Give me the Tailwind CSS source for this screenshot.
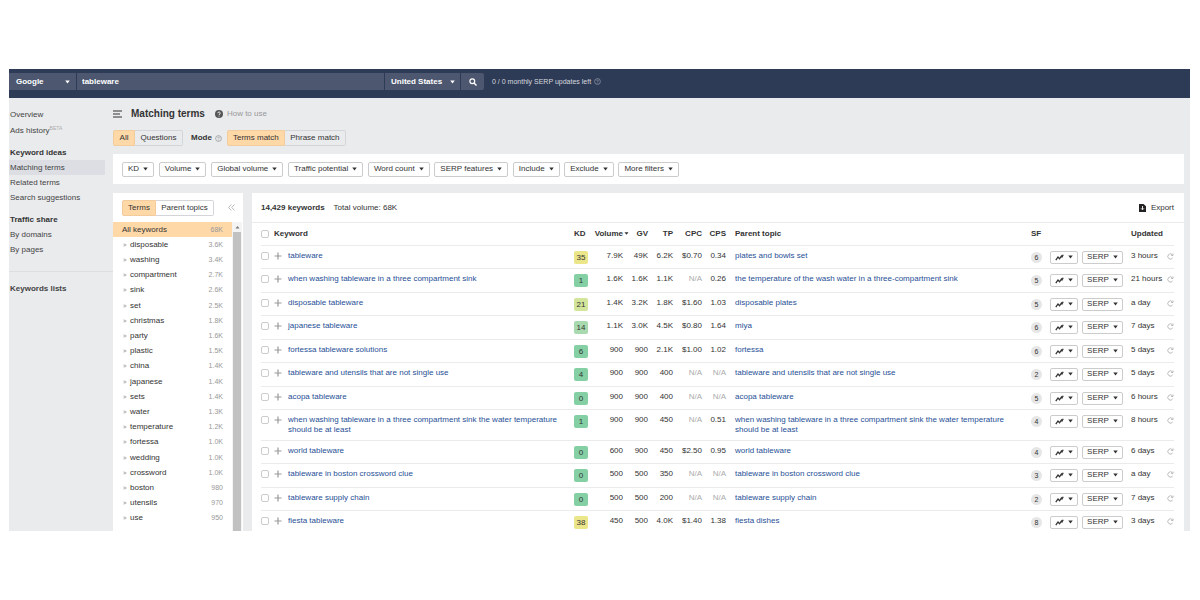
<!DOCTYPE html>
<html lang="en">
<head>
<meta charset="utf-8">
<title>Matching terms</title>
<script src="https://cdn.jsdelivr.net/npm/@tailwindcss/browser@4"></script>
</head>
<body class="bg-white font-['Liberation_Sans',Arial,sans-serif] text-[8px] leading-[10px] text-[#333]">
<svg class="hidden">
  <symbol id="caret" viewBox="0 0 6 4"><path d="M0.3 0.2h5.4L3 3.8z" fill="currentColor"/></symbol>
  <symbol id="help" viewBox="0 0 8 8"><circle cx="4" cy="4" r="4" fill="currentColor"/><path d="M2.8 3.2c0-1.6 2.5-1.5 2.5-.1C5.300 4 4 4 4 5M4 5.700v.9" fill="none" stroke="#fff" stroke-width=".9"/></symbol>
  <symbol id="helpline" viewBox="0 0 8 8"><circle cx="4" cy="4" r="3.300" fill="none" stroke="currentColor" stroke-width=".9"/><path d="M3 3.300c0-1.300 2-1.200 2-.1C5 4 4 4 4 4.800M4 5.400v.8" fill="none" stroke="currentColor" stroke-width=".8"/></symbol>
  <symbol id="plus" viewBox="0 0 8 8"><path d="M4 .5v7M.5 4h7" stroke="currentColor" stroke-width="1.200"/></symbol>
  <symbol id="trend" viewBox="0 0 9 7"><path d="M.8 6.200L3 3l1.600 1.800L6.400 2l.6 1L8.200.8" fill="none" stroke="currentColor" stroke-width="1.300"/></symbol>
  <symbol id="reload" viewBox="0 0 8 8"><path d="M6.500 5.600A3 3 0 1 1 6.200 2M6.900 .6v2.200H4.700" fill="none" stroke="currentColor" stroke-width=".9"/></symbol>
</svg>
<div class="mt-[69px] mr-[10px] ml-[9px] h-[462px] overflow-hidden bg-[#eaebed]">
  <header class="flex h-[29px] items-start bg-[#2e3b56] pt-1 text-white">
    <button class="flex h-[17px] w-[67px] items-center justify-between bg-[#4d5870] pr-1.5 pl-[7px] font-bold">Google <svg class="h-1 w-[5px]"><use href="#caret"/></svg></button>
    <input aria-label="Keyword" value="tableware" class="ml-px h-[17px] w-[307px] bg-[#4d5870] px-[5px] font-bold text-white">
    <button class="ml-px flex h-[17px] w-[75px] items-center justify-between bg-[#4d5870] pr-[5px] pl-[6px] font-bold">United States <svg class="h-1 w-[5px]"><use href="#caret"/></svg></button>
    <button aria-label="Search" class="ml-px flex h-[17px] w-[23px] items-center justify-center rounded-r-xs bg-[#4d5870]"><svg class="size-2" viewBox="0 0 8 8"><circle cx="3.300" cy="3.300" r="2.400" fill="none" stroke="#fff" stroke-width="1.200"/><path d="M5 5l2.500 2.500" stroke="#fff" stroke-width="1.400"/></svg></button>
    <span class="ml-2 flex h-[17px] items-center gap-[3px] text-[7px] text-[#d5d8df]">0 / 0 monthly SERP updates left <svg class="size-[7px] text-[#8d95a5]"><use href="#helpline"/></svg></span>
  </header>
  <div class="flex">
    <aside class="w-[104px] shrink-0 pt-[9px] text-[#444]">
      <nav class="flex flex-col *:flex *:h-[15px] *:items-center *:pl-px">
        <a href="#">Overview</a>
        <a href="#" class="mt-px">Ads history<sup class="text-[5px] text-[#aaa]">BETA</sup></a>
        <h2 class="mt-[7px] font-bold text-[#333]">Keyword ideas</h2>
        <a href="#" class="w-24 bg-[#dcdee3]">Matching terms</a>
        <a href="#">Related terms</a>
        <a href="#">Search suggestions</a>
        <h2 class="mt-[7px] font-bold text-[#333]">Traffic share</h2>
        <a href="#">By domains</a>
        <a href="#">By pages</a>
      </nav>
      <h2 class="mt-3.5 border-t border-[#dcdee1] pt-3 pl-px font-bold">Keywords lists</h2>
    </aside>
    <main class="min-w-0 flex-1 pr-1.5">
      <div class="flex h-8 items-center">
        <svg class="h-2 w-[9px]" viewBox="0 0 9 8"><path d="M0 1h9M0 4h7M0 7h9" stroke="#333" stroke-width="1.200"/></svg>
        <h1 class="ml-[9px] text-[10px] leading-3 font-bold">Matching terms</h1>
        <svg class="ml-2.5 size-2 text-[#555]"><use href="#help"/></svg>
        <a href="#" class="ml-1 text-[#999]">How to use</a>
      </div>
      <div class="flex h-4 items-center *:shrink-0">
        <button class="h-4 w-[22px] rounded-l-xs border border-[#f2cc9c] bg-[#ffd8a8]">All</button>
        <button class="h-4 w-12 rounded-r-xs border border-l-0 border-[#d4d5d8]">Questions</button>
        <span class="ml-2 font-bold">Mode</span>
        <svg class="ml-[3px] size-[7px] text-[#999]"><use href="#helpline"/></svg>
        <button class="ml-[5px] h-4 w-[58px] rounded-l-xs border border-[#f2cc9c] bg-[#ffd8a8]">Terms match</button>
        <button class="h-4 w-[61px] rounded-r-xs border border-l-0 border-[#d4d5d8]">Phrase match</button>
      </div>
      <div class="mt-2 flex h-[30px] items-center bg-white px-[9px]">
        <div id="filters" class="flex w-[557px] justify-between"></div>
      </div>
      <div class="mt-[9px] flex items-stretch">
        <section class="h-[338px] w-[130px] shrink-0 overflow-hidden bg-white">
          <div class="flex h-[29px] items-center pl-[9px]">
            <button class="h-4 w-[34px] rounded-l-xs border border-[#f2cc9c] bg-[#ffd8a8]">Terms</button>
            <button class="h-4 w-[58px] rounded-r-xs border border-l-0 border-[#d4d5d8]">Parent topics</button>
            <button aria-label="Collapse" class="ml-[14px]"><svg class="size-[7px]" viewBox="0 0 7 7"><path d="M3.300.5L.6 3.500l2.700 3M6.500.5L3.800 3.500l2.700 3" fill="none" stroke="#aaa" stroke-width=".8"/></svg></button>
          </div>
          <div class="flex">
            <ul id="terms" class="w-[119px]"></ul>
            <div class="flex h-[309px] w-[10px] flex-col items-center bg-[#f4f4f4]">
              <svg class="h-2.5 w-[5px] shrink-0 text-[#777]" viewBox="0 0 5 10"><path d="M.5 6.500h4L2.500 4z" fill="currentColor"/></svg>
              <div class="w-2 flex-1 bg-[#c1c1c1]"></div>
            </div>
          </div>
        </section>
        <section class="ml-[9px] min-w-0 flex-1 bg-white">
          <div class="flex h-[30px] items-center border-b border-[#ebebeb] pr-2.5 pl-[9px]">
            <b>14,429 keywords</b><span class="ml-[9px]">Total volume: 68K</span>
            <button class="ml-auto flex items-center gap-[5px]"><svg class="h-2 w-[7px]" viewBox="0 0 7 8"><path d="M0 0h4.500L7 2.300V8H0z" fill="#222"/><path d="M3.500 2v3.500M2 4.300l1.500 1.500L5 4.300" fill="none" stroke="#fff" stroke-width=".9"/></svg>Export</button>
          </div>
          <div class="pr-2.5 pl-[9px]">
          <table class="w-full table-fixed border-collapse">
            <colgroup><col class="w-[13px]"><col class="w-[14px]"><col><col class="w-[18px]"><col class="w-[31px]"><col class="w-[25px]"><col class="w-[25px]"><col class="w-[29px]"><col class="w-[24px]"><col class="w-[305px]"><col class="w-[19px]"><col class="w-[32px]"><col class="w-[49px]"><col class="w-[36px]"><col class="w-[7px]"></colgroup>
            <thead><tr class="h-[22px] border-b border-[#ebebeb] text-right *:p-0">
              <th class="text-left"><input type="checkbox" aria-label="Select all" class="block size-2 appearance-none rounded-xs border border-[#ccc]"></th>
              <th colspan="2" class="text-left">Keyword</th><th class="text-left">KD</th>
              <th class="relative">Volume<svg class="absolute top-[9px] -right-[6px] h-[3px] w-[5px]"><use href="#caret"/></svg></th>
              <th>GV</th><th>TP</th><th>CPC</th><th>CPS</th><th class="pl-[9px]! text-left">Parent topic</th><th class="text-left">SF</th><th></th><th></th><th class="text-left">Updated</th><th></th>
            </tr></thead>
            <tbody id="rows"></tbody>
          </table>
          </div>
        </section>
      </div>
    </main>
  </div>
</div>
<script>
const filters = ['KD','Volume','Global volume','Traffic potential','Word count','SERP features','Include','Exclude','More filters'];
document.getElementById('filters').innerHTML = filters.map(f => `<button class="flex h-[15px] items-center gap-1 rounded-xs border border-[#ccc] px-[5px] whitespace-nowrap">${f}<svg class="h-1 w-[5px]"><use href="#caret"/></svg></button>`).join('');

const terms = [['disposable','3.6K'],['washing','3.4K'],['compartment','2.7K'],['sink','2.6K'],['set','2.5K'],['christmas','1.8K'],['party','1.6K'],['plastic','1.5K'],['china','1.4K'],['japanese','1.4K'],['sets','1.4K'],['water','1.3K'],['temperature','1.2K'],['fortessa','1.0K'],['wedding','1.0K'],['crossword','1.0K'],['boston','980'],['utensils','970'],['use','950'],['world','']];
document.getElementById('terms').innerHTML =
  '<li class="flex h-[15px] items-center justify-between bg-[#ffd8a8] pr-[9px] pl-[9px]"><a href="#">All keywords</a><span class="text-[7px] text-[#999]">68K</span></li>' +
  terms.map(([t, n]) => `<li class="flex h-[15px] items-center pr-[9px] pl-2.5 nth-[5n]:h-4"><svg class="size-1" viewBox="0 0 4 4"><path d="M.5.700L1.700 2 .5 3.300M2 .700L3.200 2 2 3.300" fill="none" stroke="#999" stroke-width=".8"/></svg><a href="#" class="ml-[3px]">${t}</a><span class="ml-auto text-[7px] text-[#999]">${n}</span></li>`).join('');

const long = 'when washing tableware in a three compartment sink the water temperature should be at least';
const rows = [
 ['tableware',35,'7.9K','49K','6.2K','$0.70','0.34','plates and bowls set',6,'3 hours'],
 ['when washing tableware in a three compartment sink',1,'1.6K','1.6K','1.1K','N/A','0.26','the temperature of the wash water in a three-compartment sink',5,'21 hours'],
 ['disposable tableware',21,'1.4K','3.2K','1.8K','$1.60','1.03','disposable plates',5,'a day'],
 ['japanese tableware',14,'1.1K','3.0K','4.5K','$0.80','1.64','miya',6,'7 days'],
 ['fortessa tableware solutions',6,'900','900','2.1K','$1.00','1.02','fortessa',6,'5 days'],
 ['tableware and utensils that are not single use',4,'900','900','400','N/A','N/A','tableware and utensils that are not single use',2,'5 days'],
 ['acopa tableware',0,'900','900','400','N/A','N/A','acopa tableware',5,'6 hours'],
 [long,1,'900','900','450','N/A','0.51',long,4,'8 hours'],
 ['world tableware',0,'600','900','450','$2.50','0.95','world tableware',4,'6 days'],
 ['tableware in boston crossword clue',0,'500','500','350','N/A','N/A','tableware in boston crossword clue',3,'a day'],
 ['tableware supply chain',0,'500','500','200','N/A','N/A','tableware supply chain',2,'7 days'],
 ['fiesta tableware',38,'450','500','4.0K','$1.40','1.38','fiesta dishes',8,'3 days']];
const kd = n => n > 30 ? 'bg-[#ece68a]' : n > 20 ? 'bg-[#d3e59b]' : n > 10 ? 'bg-[#a9d9ae]' : 'bg-[#84cfa4]';
const num = v => `<td class="pt-[5px] ${v === 'N/A' ? 'text-[#aaa]' : ''}">${v}</td>`;
const caret = '<svg class="h-1 w-[5px]"><use href="#caret"/></svg>';
document.getElementById('rows').innerHTML = rows.map(r => `
<tr class="h-[23px] border-b border-[#ebebeb] text-right align-top last:border-0 even:h-6">
 <td class="pt-[6px]"><input type="checkbox" aria-label="Select ${r[0]}" class="block size-2 appearance-none rounded-xs border border-[#ccc]"></td>
 <td class="pt-[6px]"><button aria-label="Add ${r[0]}" class="block"><svg class="size-2 text-[#999]"><use href="#plus"/></svg></button></td>
 <td class="pt-[5px] pr-3 pb-[5px] text-left"><a href="#" class="text-[#1f4f96]">${r[0]}</a></td>
 <td class="pt-[5px] text-left"><span class="block h-[13px] w-3.5 rounded-xs text-center leading-[13px] ${kd(r[1])}">${r[1]}</span></td>
 ${r.slice(2,7).map(num).join('')}
 <td class="pt-[5px] pr-6 pb-[5px] pl-[9px] text-left"><a href="#" class="text-[#1f4f96]">${r[7]}</a></td>
 <td class="pt-[6px]"><span class="block size-[11px] rounded-full bg-[#e6e6e6] text-center text-[7px] leading-[12px]">${r[8]}</span></td>
 <td class="pt-[5px]"><button aria-label="Trend" class="flex h-[13px] w-7 items-center justify-center gap-1 rounded-xs border border-[#ccc]"><svg class="h-[7px] w-[9px]"><use href="#trend"/></svg>${caret}</button></td>
 <td class="pt-[5px]"><button class="flex h-[13px] w-[41px] items-center justify-center gap-1 rounded-xs border border-[#ccc]">SERP ${caret}</button></td>
 <td class="pt-[5px] text-left whitespace-nowrap">${r[9]}</td>
 <td class="pt-[7px]"><button aria-label="Refresh" class="block"><svg class="size-[7px] text-[#aaa]"><use href="#reload"/></svg></button></td>
</tr>`).join('');
</script>
</body>
</html>
